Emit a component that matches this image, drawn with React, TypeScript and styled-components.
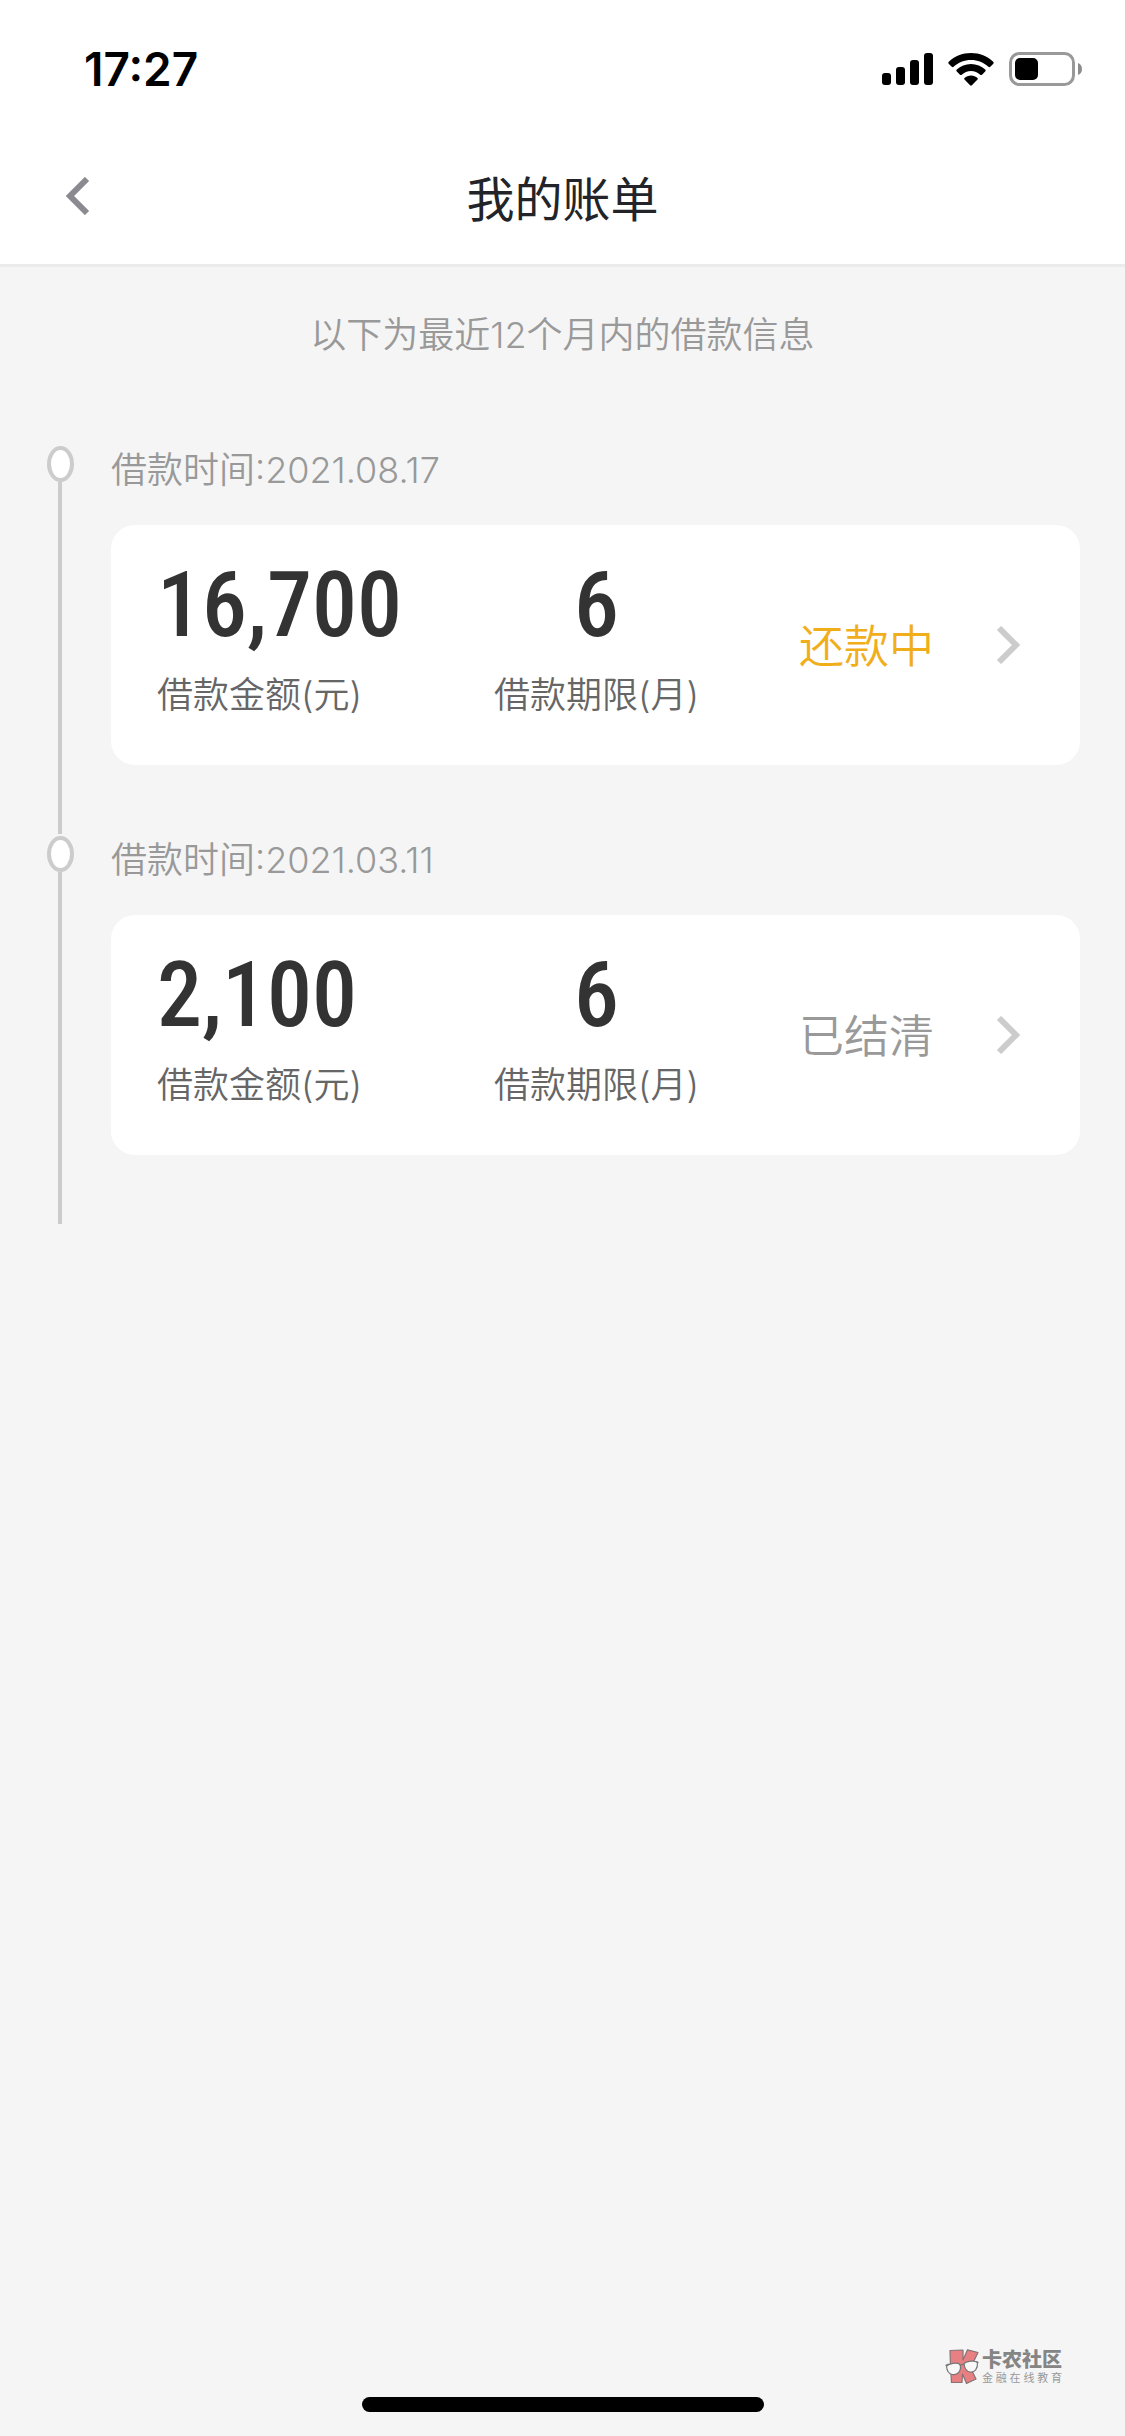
import React from "react";
import styled, { createGlobalStyle } from "styled-components";

const GlobalStyle = createGlobalStyle`
  *, *::before, *::after { box-sizing: border-box; }
  body {
    margin: 0;
    background: #f5f5f5;
    font-family: Inter, "Noto Sans CJK SC", sans-serif;
    color: #333;
  }
`;

const Page = styled.div`
  display: flex;
  flex-direction: column;
  min-height: 100vh;
`;

const Header = styled.header`
  background: #fff;
  border-bottom: 3px solid #ebebeb;
`;

const StatusBar = styled.div`
  display: flex;
  align-items: center;
  justify-content: space-between;
  height: 132px;
  padding: 6px 42px 0 84px;
`;

const Clock = styled.time`
  font-size: 46px;
  line-height: 54px;
  font-weight: 600;
  color: #000;
`;

const StatusIcons = styled.div`
  display: flex;
  align-items: center;
  gap: 15px;

  svg {
    display: block;
  }
`;

const NavBar = styled.div`
  display: grid;
  grid-template-columns: 120px 1fr 120px;
  align-items: center;
  height: 132px;
  padding-bottom: 4px;
`;

const BackButton = styled.button`
  display: flex;
  align-items: center;
  height: 96px;
  padding: 0 0 0 66px;
  border: 0;
  background: none;
`;

const Title = styled.h1`
  margin: 0;
  padding-top: 8px;
  text-align: center;
  font-size: 48px;
  line-height: 72px;
  font-weight: 400;
  color: #232429;
`;

const Main = styled.main`
  flex: 1;
`;

const Hint = styled.p`
  margin: 0;
  padding: 43px 0 83px;
  text-align: center;
  font-size: 36px;
  line-height: 51px;
  font-weight: 350;
  color: #999;
`;

const Timeline = styled.ol`
  margin: 0;
  padding: 0 45px 0 0;
  list-style: none;
`;

const Entry = styled.li`
  display: grid;
  grid-template-columns: 111px 1fr;
`;

const Rail = styled.div`
  display: flex;
  flex-direction: column;
  align-items: center;
  padding: 2px 37px 0 46px;

  &::before {
    content: "";
    width: 27px;
    height: 36px;
    border: 4px solid #ccc;
    border-radius: 50%;
    background: #fff;
  }

  &::after {
    content: "";
    flex: 1;
    width: 4px;
    background: #ccc;
  }
`;

const EntryBody = styled.div`
  padding-bottom: 69px;
`;

const LoanDate = styled.div`
  padding: 1px 0 29px;
  font-size: 36px;
  line-height: 51px;
  font-weight: 350;
  color: #999;
`;

const Card = styled.a`
  display: grid;
  grid-template-columns: 337fr 305fr 221fr;
  padding: 0 60px 0 46px;
  border-radius: 24px;
  background: #fff;
  color: inherit;
  text-decoration: none;
`;

const Metric = styled.div<{ $centered?: boolean }>`
  justify-self: start;
  display: flex;
  flex-direction: column;
  align-items: ${(p) => (p.$centered ? "center" : "flex-start")};
  gap: 13px;
  padding: 31px 0 44px;
`;

const Figure = styled.strong`
  font-family: "Roboto Condensed", "Noto Sans CJK SC", sans-serif;
  font-size: 90px;
  line-height: 100px;
  font-weight: 500;
  color: #333;
`;

const Caption = styled.span`
  font-size: 36px;
  line-height: 52px;
  font-weight: 350;
  color: #666;
  white-space: nowrap;
`;

const StatusCell = styled.div<{ $active: boolean }>`
  display: flex;
  align-items: center;
  justify-content: space-between;
  font-size: 45px;
  line-height: 66px;
  color: ${(p) => (p.$active ? "#f0ae1a" : "#999")};
  font-weight: 350;
  white-space: nowrap;
`;

const StatusLabel = styled.span`
  padding-top: 4px;
`;

const Footer = styled.footer`
  display: flex;
  flex-direction: column;
  padding-bottom: 24px;
`;

const Brand = styled.div`
  align-self: flex-end;
  display: flex;
  align-items: center;
  gap: 3px;
  margin: 0 63px 12px 0;
`;

const BrandText = styled.div`
  display: flex;
  flex-direction: column;
`;

const BrandName = styled.span`
  font-size: 20px;
  line-height: 22px;
  font-weight: 900;
  color: #858585;
`;

const BrandTag = styled.span`
  font-size: 11px;
  line-height: 14px;
  color: #999;
  text-align-last: justify;
`;

const HomeIndicator = styled.div`
  align-self: center;
  width: 402px;
  height: 15px;
  border-radius: 8px;
  background: #000;
`;

function SignalIcon() {
  return (
    <svg width="51" height="32" viewBox="0 0 51 32" aria-hidden="true">
      <rect x="0" y="20" width="9" height="12" rx="3" />
      <rect x="14" y="14" width="9" height="18" rx="3" />
      <rect x="28" y="7" width="9" height="25" rx="3" />
      <rect x="42" y="0" width="9" height="32" rx="3" />
    </svg>
  );
}

function WifiIcon() {
  return (
    <svg width="46" height="33" viewBox="0 0 46 33" aria-hidden="true">
      <path d="M23 0C31.600 0 39.400 3.300 45.200 8.800C45.800 9.400 45.800 10.100 45.300 10.700L42.300 13.700C41.700 14.300 41 14.300 40.400 13.700C35.800 9.400 29.700 6.900 23 6.900S10.200 9.400 5.600 13.700C5 14.300 4.300 14.300 3.700 13.700L.700 10.700C.200 10.100 .200 9.400 .800 8.800C6.600 3.300 14.400 0 23 0Z" />
      <path d="M23 11C28.500 11 33.500 13.100 37.200 16.600C37.800 17.200 37.800 17.900 37.200 18.500L34 21.700C33.500 22.200 32.800 22.200 32.200 21.700C29.800 19.400 26.500 18 23 18S16.200 19.400 13.800 21.700C13.200 22.200 12.500 22.200 12 21.700L8.800 18.500C8.200 17.900 8.200 17.200 8.800 16.600C12.500 13.100 17.500 11 23 11Z" />
      <path d="M23 22.500C25.500 22.500 27.800 23.400 29.500 25C30 25.500 30 26.100 29.500 26.600L23.900 32.300C23.300 32.900 22.700 32.900 22.100 32.300L16.500 26.600C16 26.100 16 25.500 16.500 25C18.200 23.400 20.500 22.500 23 22.500Z" />
    </svg>
  );
}

function BatteryIcon() {
  return (
    <svg width="74" height="34" viewBox="0 0 74 34" aria-hidden="true">
      <rect x="1.500" y="1.500" width="63" height="31" rx="9" fill="none" stroke="#999" strokeWidth="3" />
      <rect x="6" y="6" width="23" height="22" rx="5" />
      <path d="M69 11C74.300 12.500 74.300 21.500 69 23Z" fill="#8c8c8c" />
    </svg>
  );
}

function BackIcon() {
  return (
    <svg width="24" height="38" viewBox="0 0 24 38" aria-hidden="true">
      <path d="M21 2L4 19L21 36" fill="none" stroke="#8a8a90" strokeWidth="6" />
    </svg>
  );
}

function ArrowIcon() {
  return (
    <svg width="24" height="38" viewBox="0 0 24 38" aria-hidden="true">
      <path d="M3 2L20 19L3 36" fill="none" stroke="#ccc" strokeWidth="6" />
    </svg>
  );
}

function BrandIcon() {
  return (
    <svg width="34" height="36" viewBox="0 0 34 36" aria-hidden="true">
      <g fill="#e87f82" stroke="#857476" strokeWidth="1.200" strokeLinejoin="round">
        <path d="M5 1.500L18 1L18 11L22.500 .800L33 3.500L25.500 19L31 30L21.500 34.500L17.500 25L17 33.500L6.500 33.500L5.500 18Z" />
      </g>
      <g fill="#f8f8f8" stroke="#777" strokeWidth="1.200">
        <path d="M1.500 17C4 14.500 12 13 15 15.500C17 22 12 26.500 7.500 25.500C3.500 25 1.800 21 1.500 17Z" />
        <path d="M19 14.500C22 12 29.500 11 32.500 13.500C33 20 29.500 23.500 25.500 23C21.500 23 19.500 19 19 14.500Z" />
        <path d="M.500 16.500L3.500 15M15 17Q17 14.500 19 16M31 12.500L33.500 13.500" fill="none" />
      </g>
    </svg>
  );
}

type Loan = { date: string; amount: string; months: number; status: string; active: boolean };

const loans: Loan[] = [
  { date: "2021.08.17", amount: "16,700", months: 6, status: "还款中", active: true },
  { date: "2021.03.11", amount: "2,100", months: 6, status: "已结清", active: false },
];

function LoanEntry({ loan }: { loan: Loan }) {
  return (
    <Entry>
      <Rail />
      <EntryBody>
        <LoanDate>借款时间:{loan.date}</LoanDate>
        <Card href="#">
          <Metric>
            <Figure>{loan.amount}</Figure>
            <Caption>借款金额(元)</Caption>
          </Metric>
          <Metric $centered>
            <Figure>{loan.months}</Figure>
            <Caption>借款期限(月)</Caption>
          </Metric>
          <StatusCell $active={loan.active}>
            <StatusLabel>{loan.status}</StatusLabel>
            <ArrowIcon />
          </StatusCell>
        </Card>
      </EntryBody>
    </Entry>
  );
}

export default function App() {
  return (
    <Page>
      <GlobalStyle />
      <Header>
        <StatusBar>
          <Clock>17:27</Clock>
          <StatusIcons>
            <SignalIcon />
            <WifiIcon />
            <BatteryIcon />
          </StatusIcons>
        </StatusBar>
        <NavBar>
          <BackButton type="button" aria-label="返回">
            <BackIcon />
          </BackButton>
          <Title>我的账单</Title>
        </NavBar>
      </Header>
      <Main>
        <Hint>以下为最近12个月内的借款信息</Hint>
        <Timeline>
          {loans.map((loan) => (
            <LoanEntry key={loan.date} loan={loan} />
          ))}
        </Timeline>
      </Main>
      <Footer>
        <Brand>
          <BrandIcon />
          <BrandText>
            <BrandName>卡农社区</BrandName>
            <BrandTag>金融在线教育</BrandTag>
          </BrandText>
        </Brand>
        <HomeIndicator />
      </Footer>
    </Page>
  );
}
